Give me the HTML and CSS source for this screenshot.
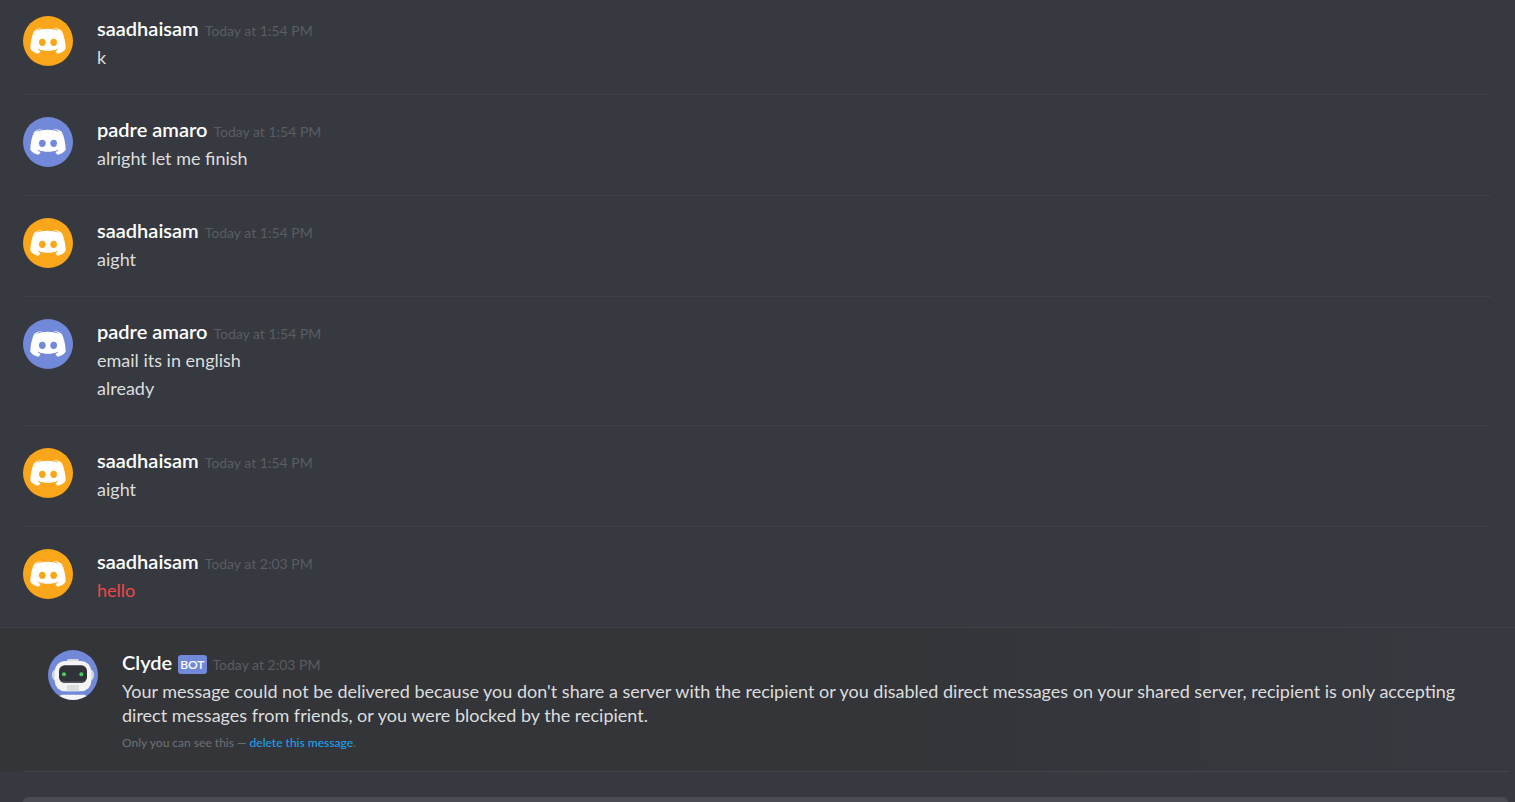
FILE: index.html
```html
<!DOCTYPE html>
<html lang="en">
    <head>
        <title>Direct messages</title>
        <meta charset="utf-8">
        <link rel="stylesheet" href="styles.css">
    </head>
    <body>
        <svg class="defs" width="0" height="0" aria-hidden="true">
            <symbol id="logo" viewBox="0 0 150 150">
                <path fill="#fff" d="M58 35c-10 1-18 4-24 9C27 58 22 78 22 98c5 8 13 13 25 15l6-8c-4-1-7-3-9-6l1-1c18 8 42 8 60 0l1 1c-2 3-5 5-9 6l6 8c12-2 20-7 25-15 0-20-5-40-12-54-6-5-14-8-24-9l-1 2c7 1 13 4 17 7-21-8-47-8-68 0 4-3 10-6 17-7z"/>
                <ellipse class="eye" cx="58" cy="79" rx="10" ry="11"/>
                <ellipse class="eye" cx="92" cy="79" rx="10" ry="11"/>
            </symbol>
        </svg>

        <main class="messages">
            <div class="group">
                <svg class="avatar orange"><use href="#logo"/></svg>
                <div class="content">
                    <h2><strong>saadhaisam</strong> <time>Today at 1:54 PM</time></h2>
                    <p>k</p>
                </div>
            </div>
            <div class="group">
                <svg class="avatar blue"><use href="#logo"/></svg>
                <div class="content">
                    <h2><strong>padre amaro</strong> <time>Today at 1:54 PM</time></h2>
                    <p>alright let me finish</p>
                </div>
            </div>
            <div class="group">
                <svg class="avatar orange"><use href="#logo"/></svg>
                <div class="content">
                    <h2><strong>saadhaisam</strong> <time>Today at 1:54 PM</time></h2>
                    <p>aight</p>
                </div>
            </div>
            <div class="group">
                <svg class="avatar blue"><use href="#logo"/></svg>
                <div class="content">
                    <h2><strong>padre amaro</strong> <time>Today at 1:54 PM</time></h2>
                    <p>email its in english</p>
                    <p>already</p>
                </div>
            </div>
            <div class="group">
                <svg class="avatar orange"><use href="#logo"/></svg>
                <div class="content">
                    <h2><strong>saadhaisam</strong> <time>Today at 1:54 PM</time></h2>
                    <p>aight</p>
                </div>
            </div>
            <div class="group last">
                <svg class="avatar orange"><use href="#logo"/></svg>
                <div class="content">
                    <h2><strong>saadhaisam</strong> <time>Today at 2:03 PM</time></h2>
                    <p class="failed">hello</p>
                </div>
            </div>
        </main>

        <section class="local">
            <div class="group">
                <svg class="avatar blue" viewBox="0 0 150 150">
                    <rect x="57" y="27" width="36" height="12" rx="5" fill="#d5d8dc"/>
                    <rect x="12" y="56" width="126" height="37" rx="16" fill="#d3d6db"/>
                    <rect x="20" y="33" width="110" height="91" rx="31" fill="#f4f4f5"/>
                    <path d="M57 105h36v19H57z" fill="#dcdddf"/>
                    <rect x="33" y="46" width="84" height="53" rx="17" fill="#303338"/>
                    <path d="M38 90c3 6 8 9 14 9h46c6 0 11-3 14-9-4 3-8 4-14 4H52c-6 0-10-1-14-4z" fill="#52565c"/>
                    <circle cx="48" cy="73" r="6" fill="#43d15d"/>
                    <circle cx="100" cy="73" r="6" fill="#43d15d"/>
                    <path d="M30 150c0-11 7-16 16-16h58c9 0 16 5 16 16z" fill="#f4f4f5"/>
                </svg>
                <div class="content">
                    <h2><strong>Clyde</strong> <span class="bot">BOT</span> <time>Today at 2:03 PM</time></h2>
                    <p>Your message could not be delivered because you don't share a server with the recipient or you disabled direct messages on your shared server, recipient is only accepting direct messages from friends, or you were blocked by the recipient.</p>
                    <small>Only you can see this — <a href="#">delete this message</a>.</small>
                </div>
            </div>
        </section>

        <form class="composer">
            <input type="text" aria-label="Message">
        </form>
    </body>
</html>
```

FILE: styles.css
```css
body {
    display: flex;
    flex-direction: column;
    margin: 0;
    height: 100vh;
    overflow: hidden;
    background: #36393f;
    color: #dcddde;
    font-family: Lato, "Open Sans", sans-serif;
    font-size: 18px;
}

.defs {
    position: absolute;
}

.messages .group {
    display: flex;
    margin: 0 24px 0 23px;
    padding: 22px 0;
    border-bottom: 1px solid #3e4147;
}

.messages .group:first-child {
    padding-top: 16px;
}

.messages .last {
    margin: 0;
    padding-left: 23px;
}

.avatar {
    flex: none;
    width: 50px;
    height: 50px;
    margin-right: 24px;
    border-radius: 50%;
}

.orange {
    background: #faa61a;
    color: #faa61a;
}

.blue {
    background: #7289da;
    color: #7289da;
}

.eye {
    fill: currentColor;
}

.content {
    flex: 1;
}

h2 {
    display: flex;
    align-items: baseline;
    gap: 6px;
    height: 28px;
    margin: 0;
    font-size: 20px;
    font-weight: normal;
    line-height: 24px;
}

h2 strong {
    font-weight: 600;
    color: #fff;
}

time {
    font-size: 14px;
    color: #5a5d63;
}

p {
    margin: 0;
    padding: 1px 0 3px;
    line-height: 24px;
}

.failed {
    color: #f04747;
}

.local {
    background: linear-gradient(to right, #333539 60%, #36393f);
}

.local .group {
    display: flex;
    margin: 0 7px 0 23px;
    padding: 22px 48px 18px 25px;
    border-bottom: 1px solid #43464b;
}

.bot {
    align-self: center;
    padding: 0 2px;
    border-radius: 3px;
    background: #7289da;
    color: #fff;
    font-size: 12px;
    font-weight: 600;
    line-height: 19px;
}

small {
    display: block;
    padding-top: 3px;
    font-size: 12px;
    font-weight: 500;
    line-height: 20px;
    color: #6b6e73;
}

small a {
    color: #1da0ec;
    text-decoration: none;
}

.composer {
    display: flex;
    flex: 1;
    min-height: 0;
    margin: 25px 7px 0 23px;
}

.composer input {
    flex: 1;
    min-height: 0;
    padding: 0 16px;
    border: 0;
    border-radius: 6px 6px 0 0;
    background: #484b52;
    color: #dcddde;
}
```
